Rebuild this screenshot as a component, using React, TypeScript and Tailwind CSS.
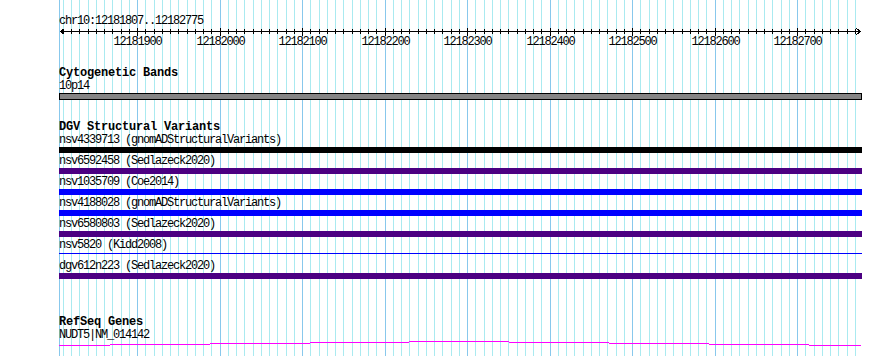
import React from 'react';

// 100 bp = 82.5 px in the image, 12181900 sits on column 137
const xOf = (bp: number) => Math.round(137 + (bp - 12181900) * 0.825);

const tens: number[] = [];
for (let bp = 12181810; bp <= 12182770; bp += 10) tens.push(bp);

const MAJOR = '#88c8ec';
const MINOR = '#aaeaf0';

interface Variant {
  id: string;
  source: string;
  kind: 'bar' | 'line';
  color: string;
}

const variants: Variant[] = [
  { id: 'nsv4339713', source: 'gnomADStructuralVariants', kind: 'bar', color: 'bg-black' },
  { id: 'nsv6592458', source: 'Sedlazeck2020', kind: 'bar', color: 'bg-[#4b0082]' },
  { id: 'nsv1035709', source: 'Coe2014', kind: 'bar', color: 'bg-[#0000ff]' },
  { id: 'nsv4188028', source: 'gnomADStructuralVariants', kind: 'bar', color: 'bg-[#0000ff]' },
  { id: 'nsv6580803', source: 'Sedlazeck2020', kind: 'bar', color: 'bg-[#4b0082]' },
  { id: 'nsv5820', source: 'Kidd2008', kind: 'line', color: 'bg-[#0000ff]' },
  { id: 'dgv612n223', source: 'Sedlazeck2020', kind: 'bar', color: 'bg-[#4b0082]' },
];

// gene model segments: [x1, x2, row offset]
const geneSegments: [number, number, number][] = [
  [59, 110, 4],
  [110, 210, 3],
  [210, 310, 2],
  [310, 409, 1],
  [409, 509, 0],
  [509, 609, 1],
  [609, 709, 2],
  [709, 809, 3],
  [809, 861, 4],
];

const Grid: React.FC = () => (
  <svg className="absolute inset-0" width={890} height={356} shapeRendering="crispEdges">
    <line x1={59.5} y1={0} x2={59.5} y2={356} stroke={MAJOR} />
    {tens.map(bp => (
      <line
        key={bp}
        x1={xOf(bp) + 0.5}
        y1={0}
        x2={xOf(bp) + 0.5}
        y2={356}
        stroke={bp % 100 === 0 ? MAJOR : MINOR}
      />
    ))}
  </svg>
);

const Ruler: React.FC = () => (
  <svg className="block" width={890} height={20} shapeRendering="crispEdges">
    <line x1={60} y1={3.5} x2={861} y2={3.5} stroke="#000" />
    <polyline points="64.5,0.5 60.5,3.5 64.5,6.5" fill="none" stroke="#000" />
    <polyline points="856.5,0.5 860.5,3.5 856.5,6.5" fill="none" stroke="#000" />
    {tens.map(bp => {
      const major = bp % 100 === 0;
      return (
        <line
          key={bp}
          x1={xOf(bp) + 0.5}
          y1={major ? 0 : 1}
          x2={xOf(bp) + 0.5}
          y2={major ? 8 : 6}
          stroke="#000"
        />
      );
    })}
    {tens
      .filter(bp => bp % 100 === 0)
      .map(bp => (
        <text
          key={bp}
          x={xOf(bp) + 0.5}
          y={16.5}
          textAnchor="middle"
          fontFamily="'Liberation Mono', monospace"
          fontSize={12}
          letterSpacing={-1.2}
          fill="#000"
        >
          {bp}
        </text>
      ))}
  </svg>
);

const TrackTitle: React.FC<{ children: React.ReactNode }> = ({ children }) => (
  <div className="h-[13px] pl-[59px] text-[12px] leading-[13px] font-bold tracking-[-0.2px] whitespace-nowrap">
    {children}
  </div>
);

const Label: React.FC<{ children: React.ReactNode }> = ({ children }) => (
  <div className="h-[13px] pl-[59px] text-[12px] leading-[13px] tracking-[-1.2px] whitespace-nowrap">
    {children}
  </div>
);

const App: React.FC = () => {
  return (
    <div className="relative w-[890px] h-[356px] overflow-hidden bg-white text-black font-['Liberation_Mono',monospace]">
      <Grid />

      <div className="relative pt-[15px]">
        {/* ruler */}
        <Label>chr10:12181807..12182775</Label>
        <Ruler />

        {/* Cytogenetic Bands */}
        <div className="mt-[19px]">
          <TrackTitle>Cytogenetic Bands</TrackTitle>
          <Label>10p14</Label>
          <div className="ml-[59px] w-[803px] h-[7px] border border-black bg-[#858585]" />
        </div>

        {/* DGV Structural Variants */}
        <div className="mt-[21px]">
          <TrackTitle>DGV Structural Variants</TrackTitle>
          {variants.map(v => (
            <div key={v.id} className="h-[21px]">
              <Label>
                {v.id} ({v.source})
              </Label>
              <div className="h-[6px] ml-[59px] w-[803px]">
                {v.kind === 'bar' ? (
                  <div className={`h-[6px] ${v.color}`} />
                ) : (
                  <div className={`mt-[1px] h-[1px] ${v.color}`} />
                )}
              </div>
            </div>
          ))}
        </div>

        {/* RefSeq Genes */}
        <div className="mt-[35px]">
          <TrackTitle>RefSeq Genes</TrackTitle>
          <div className="h-[12px] pl-[59px] text-[12px] leading-[12px] tracking-[-1.2px] whitespace-nowrap">
            NUDT5|NM_014142
          </div>
          <svg className="block" width={890} height={6} shapeRendering="crispEdges">
            {geneSegments.map(([x1, x2, dy]) => (
              <line key={x1} x1={x1} y1={dy + 0.5} x2={x2} y2={dy + 0.5} stroke="#ff00ff" />
            ))}
          </svg>
        </div>
      </div>
    </div>
  );
};

export default App;
